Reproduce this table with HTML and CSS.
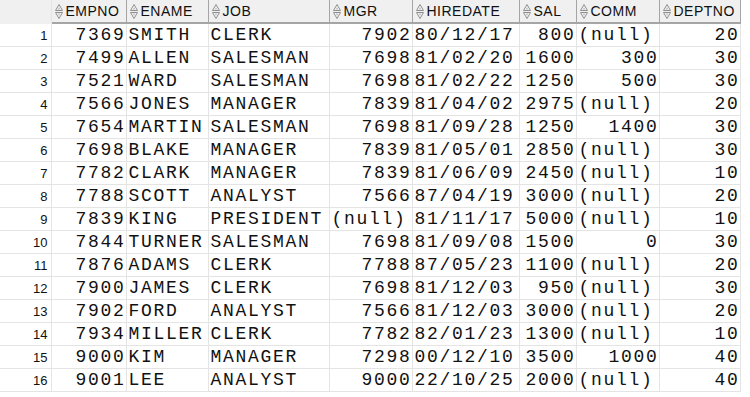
FILE: index.html
```html
<!DOCTYPE html>
<html lang="en">
<head>
    <meta charset="UTF-8">
    <title>EMP</title>
    <link rel="stylesheet" href="styles.css">
</head>
<body>
<table class="grid">
    <colgroup>
        <col class="c-num">
        <col class="c-empno">
        <col class="c-ename">
        <col class="c-job">
        <col class="c-mgr">
        <col class="c-date">
        <col class="c-sal">
        <col class="c-comm">
        <col class="c-dept">
    </colgroup>
    <thead>
        <tr>
            <th class="corner"></th>
            <th><span class="sort"></span>EMPNO</th>
            <th><span class="sort"></span>ENAME</th>
            <th><span class="sort"></span>JOB</th>
            <th><span class="sort"></span>MGR</th>
            <th><span class="sort"></span>HIREDATE</th>
            <th><span class="sort"></span>SAL</th>
            <th><span class="sort"></span>COMM</th>
            <th><span class="sort"></span>DEPTNO</th>
        </tr>
    </thead>
    <tbody id="rows"></tbody>
</table>

<script>
    var emp = [
        [7369, "SMITH", "CLERK", "7902", "80/12/17", 800, "(null)", 20],
        [7499, "ALLEN", "SALESMAN", "7698", "81/02/20", 1600, "300", 30],
        [7521, "WARD", "SALESMAN", "7698", "81/02/22", 1250, "500", 30],
        [7566, "JONES", "MANAGER", "7839", "81/04/02", 2975, "(null)", 20],
        [7654, "MARTIN", "SALESMAN", "7698", "81/09/28", 1250, "1400", 30],
        [7698, "BLAKE", "MANAGER", "7839", "81/05/01", 2850, "(null)", 30],
        [7782, "CLARK", "MANAGER", "7839", "81/06/09", 2450, "(null)", 10],
        [7788, "SCOTT", "ANALYST", "7566", "87/04/19", 3000, "(null)", 20],
        [7839, "KING", "PRESIDENT", "(null)", "81/11/17", 5000, "(null)", 10],
        [7844, "TURNER", "SALESMAN", "7698", "81/09/08", 1500, "0", 30],
        [7876, "ADAMS", "CLERK", "7788", "87/05/23", 1100, "(null)", 20],
        [7900, "JAMES", "CLERK", "7698", "81/12/03", 950, "(null)", 30],
        [7902, "FORD", "ANALYST", "7566", "81/12/03", 3000, "(null)", 20],
        [7934, "MILLER", "CLERK", "7782", "82/01/23", 1300, "(null)", 10],
        [9000, "KIM", "MANAGER", "7298", "00/12/10", 3500, "1000", 40],
        [9001, "LEE", "ANALYST", "9000", "22/10/25", 2000, "(null)", 40]
    ];

    // 숫자 컬럼은 오른쪽, (null) 이면 왼쪽 정렬
    var numCols = [0, 3, 5, 6, 7];
    var sortIcon = '<svg width="8" height="15" viewBox="0 0 8 15">' +
        '<path d="M4 0.5 L7.5 6.5 L0.5 6.5 Z M0.5 8.5 L7.5 8.5 L4 14.5 Z" fill="#f8f8f8" stroke="#8e8e8e" stroke-width="1"/>' +
        '<path d="M4 3 L5.5 5.5 L2.5 5.5 Z M2.5 9.5 L5.5 9.5 L4 12 Z" fill="#c4c4c4"/>' +
        '</svg>';

    document.querySelectorAll(".sort").forEach(function (s) {
        s.innerHTML = sortIcon;
    });

    var body = document.getElementById("rows");
    emp.forEach(function (row, i) {
        var tr = document.createElement("tr");
        var html = '<td class="num">' + (i + 1) + '</td>';
        row.forEach(function (v, c) {
            var cls = "txt";
            if (numCols.indexOf(c) >= 0 && v !== "(null)") cls = "right";
            html += '<td class="' + cls + '">' + v + '</td>';
        });
        tr.innerHTML = html;
        body.appendChild(tr);
    });
</script>
</body>
</html>
```

FILE: styles.css
```css
body {
    margin: 0;
    background-color: white;
}

.grid {
    border-collapse: collapse;
    table-layout: fixed;
    width: 740px;
}

.c-num { width: 51px; }
.c-empno { width: 75px; }
.c-ename { width: 82px; }
.c-job { width: 121px; }
.c-mgr { width: 83px; }
.c-date { width: 107px; }
.c-sal { width: 57px; }
.c-comm { width: 83px; }
.c-dept { width: 81px; }

.grid th {
    height: 22px;
    padding: 0 0 0 3px;
    background-color: #f0f0f0;
    border-left: 1px solid #fbfbfb;
    border-right: 1px solid #a5a5a5;
    border-bottom: 2px solid #a5a5a5;
    font-family: "Liberation Sans", Arial, sans-serif;
    font-size: 14px;
    font-weight: normal;
    letter-spacing: 0.5px;
    color: #111;
    text-align: left;
    white-space: nowrap;
    overflow: hidden;
}

.grid th.corner {
    border-left: none;
    border-right: 1px solid #e4e4e4;
    border-bottom: 2px solid #f0f0f0;
}

.sort {
    display: inline-block;
    vertical-align: -3px;
    margin-right: 3px;
}

.sort svg {
    display: block;
}

.grid td {
    height: 22px;
    padding: 0 2px;
    border-right: 1px solid #e4e4e4;
    border-bottom: 1px solid #e4e4e4;
    font-family: "Liberation Mono", "Courier New", monospace;
    font-size: 18px;
    letter-spacing: 1.7px;
    color: #111;
    white-space: nowrap;
    overflow: hidden;
}

.grid td.right {
    text-align: right;
    padding-right: 0;
}

.grid td.num {
    padding: 0 3px 0 0;
    text-align: right;
    font-family: "Liberation Sans", Arial, sans-serif;
    font-size: 13px;
    letter-spacing: 0;
    color: #111;
}
```
